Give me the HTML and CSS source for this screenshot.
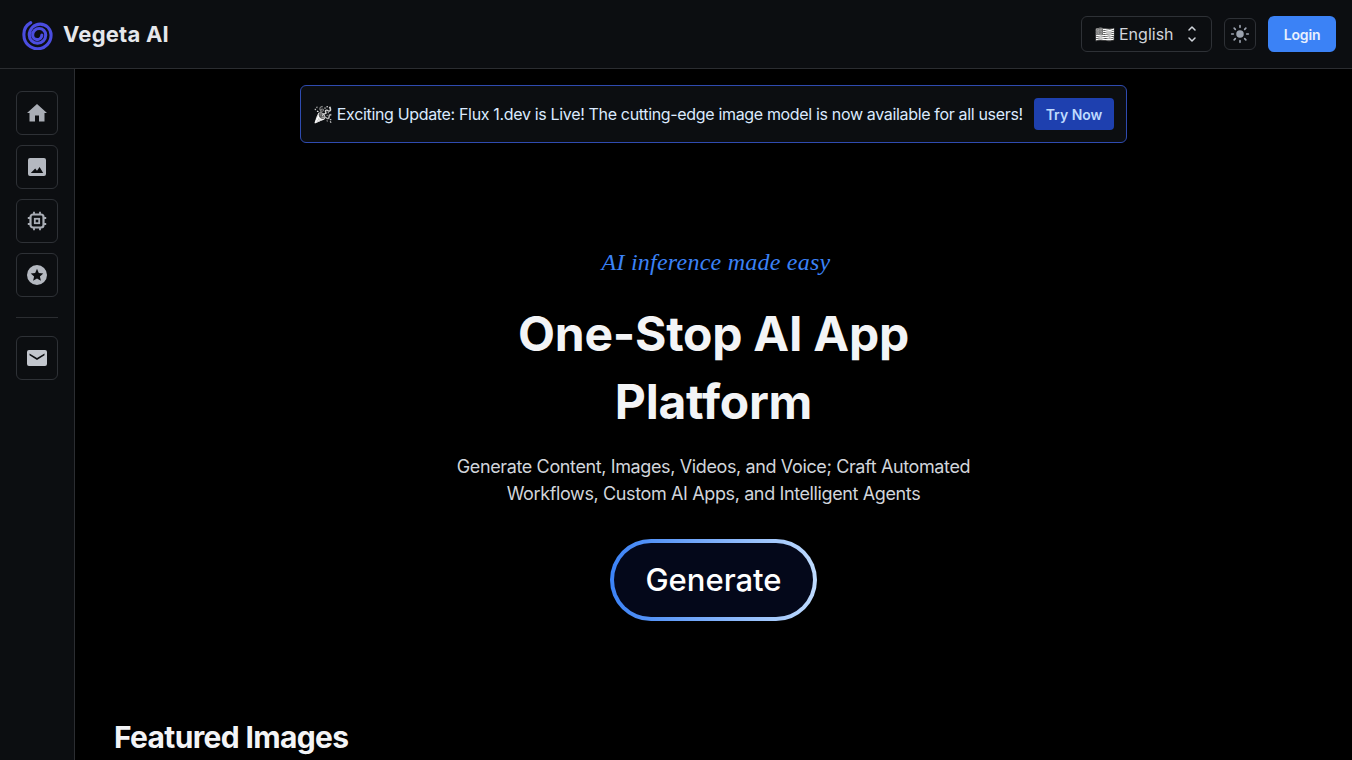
FILE: index.html
```html
<!DOCTYPE html>
<html lang="en">
<head>
    <meta charset="UTF-8">
    <meta name="viewport" content="width=device-width, initial-scale=1.0">
    <title>Vegeta AI</title>
    <link rel="stylesheet" href="styles.css">
</head>
<body>
    <header class="topbar">
        <a class="brand" href="#">
            <svg class="brand-logo" viewBox="0 0 32 32" fill="none" stroke="#4b4de0" stroke-width="3.2" stroke-linecap="round">
                <path d="M9 3.800A14 14 0 0 0 2 17A14 14 0 0 0 30 16.500A11.250 11.250 0 0 0 7.500 16.500A8.500 8.500 0 0 0 24.500 16.500A6.750 6.750 0 0 0 11 16.500A4.750 4.750 0 0 0 20.500 16.500"/>
            </svg>
            <span class="brand-name">Vegeta AI</span>
        </a>
        <div class="topbar-actions">
            <button class="lang-select">
                <span class="emoji">🇺🇸</span>
                <span>English</span>
                <svg class="chevrons" viewBox="0 0 12 20" fill="none" stroke="#d1d5db" stroke-width="1.500" stroke-linecap="round" stroke-linejoin="round">
                    <path d="M3 6l3-3 3 3M3 14l3 3 3-3"/>
                </svg>
            </button>
            <button class="theme-btn">
                <svg viewBox="0 0 24 24" fill="#9ca3af" stroke="#9ca3af" stroke-width="2" stroke-linecap="round">
                    <circle cx="12" cy="12" r="4.500" stroke="none"/>
                    <path d="M12 2v2M12 20v2M2 12h2M20 12h2M5 5l1.400 1.400M17.600 17.600L19 19M5 19l1.400-1.400M17.600 6.400L19 5"/>
                </svg>
            </button>
            <button class="login-btn">Login</button>
        </div>
    </header>

    <div class="layout">
        <nav class="sidebar">
            <a class="side-btn" href="#">
                <svg viewBox="0 0 24 24" fill="#a9adb5"><path d="M10 20.500v-6h4v6h5.500v-8.500H22L12 3 2 12h2.500v8.500z"/></svg>
            </a>
            <a class="side-btn" href="#">
                <svg viewBox="0 0 24 24" fill="#b4b8c0"><path fill-rule="evenodd" d="M5 3h14a2 2 0 0 1 2 2v14a2 2 0 0 1-2 2H5a2 2 0 0 1-2-2V5a2 2 0 0 1 2-2zm.8 15h12.400l-3.600-6-2.600 3.800-1.800-2.300z"/></svg>
            </a>
            <a class="side-btn" href="#">
                <svg viewBox="0 0 24 24" fill="none" stroke="#a9adb5" stroke-width="2.200">
                    <rect x="5.500" y="5.500" width="13" height="13" rx="2.500"/>
                    <rect x="9.800" y="9.800" width="4.400" height="4.400" stroke-width="1.800"/>
                    <path d="M9 2.800v3M15 2.800v3M9 18.200v3M15 18.200v3M2.800 9h3M2.800 15h3M18.200 9h3M18.200 15h3" stroke-width="1.800"/>
                </svg>
            </a>
            <a class="side-btn" href="#">
                <svg viewBox="0 0 24 24" fill="#b4b8c0"><path fill-rule="evenodd" d="M12 2a10 10 0 1 0 0 20 10 10 0 0 0 0-20zm0 3.800l1.800 4.200 4.500.4-3.400 3 1 4.400-3.900-2.300-3.900 2.300 1-4.400-3.400-3 4.500-.4z"/></svg>
            </a>
            <div class="side-divider"></div>
            <a class="side-btn" href="#">
                <svg viewBox="0 0 24 24" fill="#c2c6cd"><path fill-rule="evenodd" d="M4 4h16a2 2 0 0 1 2 2v12a2 2 0 0 1-2 2H4a2 2 0 0 1-2-2V6a2 2 0 0 1 2-2zm.5 3.500v1.800l7.500 4.700 7.500-4.700V7.500L12 12z"/></svg>
            </a>
        </nav>

        <main class="content">
            <div class="banner">
                <span class="banner-text"><span class="emoji">🎉</span> Exciting Update: Flux 1.dev is Live! The cutting-edge image model is now available for all users!</span>
                <a class="banner-btn" href="#">Try Now</a>
            </div>

            <section class="hero">
                <p class="tagline">AI inference made easy</p>
                <h1>One-Stop AI App<br>Platform</h1>
                <p class="subtitle">Generate Content, Images, Videos, and Voice; Craft Automated<br>Workflows, Custom AI Apps, and Intelligent Agents</p>
                <a class="generate-btn" href="#">Generate</a>
            </section>

            <h2 class="section-title">Featured Images</h2>
        </main>
    </div>
</body>
</html>
```

FILE: styles.css
```css
* {
    margin: 0;
    padding: 0;
    box-sizing: border-box;
}

html, body {
    height: 100%;
    overflow: hidden;
}

body {
    font-family: Inter, "Noto Sans", sans-serif;
    background: #000;
    color: #e5e7eb;
}

a {
    text-decoration: none;
    color: inherit;
}

button {
    font-family: inherit;
    cursor: pointer;
}

.emoji {
    filter: grayscale(1) brightness(1.25);
}

.topbar {
    height: 69px;
    background: #0c0e11;
    border-bottom: 1px solid #2b2d31;
    display: flex;
    align-items: center;
    justify-content: space-between;
    padding: 0 16px 0 22px;
}

.brand {
    display: flex;
    align-items: center;
    gap: 10px;
}

.brand-logo {
    width: 31px;
    height: 31px;
}

.brand-name {
    font-size: 22px;
    font-weight: 700;
    letter-spacing: 0.01em;
    color: #e5e7eb;
}

.topbar-actions {
    display: flex;
    align-items: center;
    gap: 12px;
}

.lang-select {
    width: 131px;
    height: 36px;
    background: #0c0e11;
    border: 1px solid #2e3136;
    border-radius: 6px;
    color: #d1d5db;
    font-size: 16px;
    display: flex;
    align-items: center;
    padding: 0 13px;
    gap: 4px;
}

.chevrons {
    width: 12px;
    height: 20px;
    margin-left: auto;
}

.theme-btn {
    width: 32px;
    height: 32px;
    background: #0c0e11;
    border: 1px solid #2e3136;
    border-radius: 6px;
    display: flex;
    align-items: center;
    justify-content: center;
}

.theme-btn svg {
    width: 20px;
    height: 20px;
}

.login-btn {
    width: 68px;
    height: 36px;
    background: #3b82f6;
    border: none;
    border-radius: 6px;
    color: #e8f0fe;
    font-size: 14px;
    font-weight: 600;
    letter-spacing: -0.01em;
}

.layout {
    display: flex;
    height: calc(100% - 69px);
}

.sidebar {
    width: 75px;
    flex-shrink: 0;
    background: #0c0e11;
    border-right: 1px solid #2b2d31;
    padding: 22px 16px 0;
    display: flex;
    flex-direction: column;
    gap: 10px;
}

.side-btn {
    width: 42px;
    height: 44px;
    border: 1px solid #2e3136;
    border-radius: 6px;
    display: flex;
    align-items: center;
    justify-content: center;
}

.side-btn svg {
    width: 24px;
    height: 24px;
}

.side-divider {
    height: 1px;
    background: #2b2d31;
    margin: 10px 0 8px;
}

.content {
    flex: 1;
    display: flex;
    flex-direction: column;
    align-items: center;
    padding-top: 16px;
}

.banner {
    width: 827px;
    height: 58px;
    background: #0c0e11;
    border: 1px solid #2f4bb0;
    border-radius: 6px;
    display: flex;
    align-items: center;
    justify-content: space-between;
    padding: 0 12px;
}

.banner-text {
    font-size: 16px;
    letter-spacing: -0.021em;
    color: #dbeafe;
    white-space: nowrap;
}

.banner-btn {
    width: 80px;
    height: 32px;
    flex-shrink: 0;
    background: #1e40af;
    border-radius: 4px;
    color: #bfdbfe;
    font-size: 14px;
    font-weight: 600;
    display: flex;
    align-items: center;
    justify-content: center;
}

.hero {
    display: flex;
    flex-direction: column;
    align-items: center;
    text-align: center;
    padding-top: 100px;
}

.tagline {
    font-family: "Liberation Serif", cursive;
    font-size: 24px;
    line-height: 38px;
    letter-spacing: 0.01em;
    padding-left: 5px;
    color: #3b82f6;
    font-style: italic;
}

h1 {
    font-size: 48px;
    line-height: 68px;
    font-weight: 700;
    letter-spacing: -0.005em;
    color: #f3f4f6;
    margin-top: 19px;
}

.subtitle {
    font-size: 18px;
    line-height: 27px;
    letter-spacing: -0.021em;
    color: #d1d5db;
    margin-top: 17px;
}

.generate-btn {
    width: 207px;
    height: 82px;
    margin-top: 32px;
    padding-bottom: 2px;
    border-radius: 41px;
    border: 4px solid transparent;
    background: linear-gradient(#04081a, #04081a) padding-box, linear-gradient(90deg, #3b82f6, #bfdbfe) border-box;
    color: #fff;
    font-size: 31px;
    font-weight: 500;
    display: flex;
    align-items: center;
    justify-content: center;
}

.section-title {
    align-self: flex-start;
    margin: 98px 0 0 39px;
    font-size: 30px;
    line-height: 36px;
    font-weight: 700;
    letter-spacing: -0.022em;
    color: #f3f4f6;
}
```
